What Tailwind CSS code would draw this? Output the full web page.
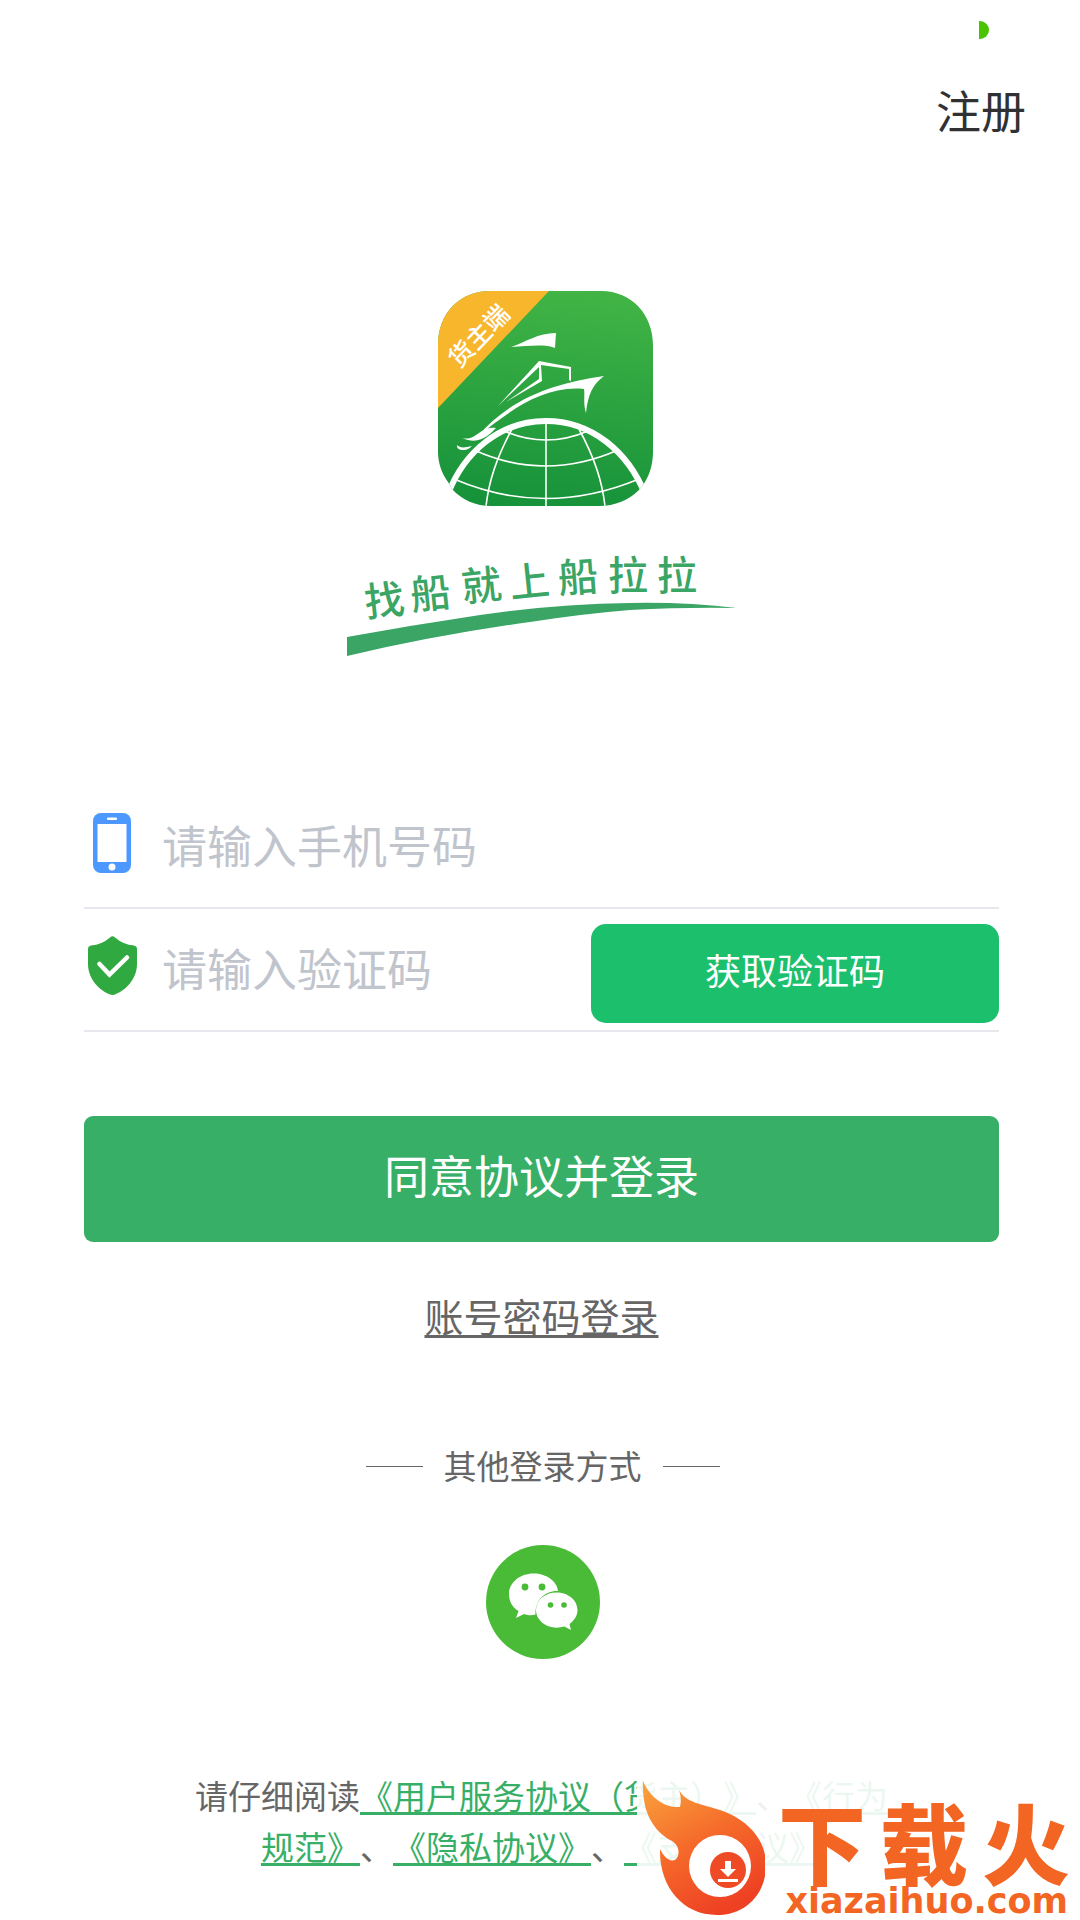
<!DOCTYPE html>
<html lang="zh-CN">
<head>
<meta charset="utf-8">
<meta name="viewport" content="width=device-width, initial-scale=1">
<title>登录</title>
<script src="https://cdn.jsdelivr.net/npm/@tailwindcss/browser@4"></script>
</head>
<body class="relative min-h-screen overflow-x-hidden bg-white font-['Noto_Sans_CJK_SC',sans-serif] text-[#666] [text-spacing-trim:space-all]">
<header class="flex flex-col items-end pt-[21px] pr-[54px]">
  <span class="mr-[37px] h-[18px] w-[10px] rounded-r-full bg-[#4ac400]"></span>
  <a href="#register" class="mt-[44px] text-[45px] leading-[54px] text-[#303133]">注册</a>
</header>

<main class="flex flex-col items-center pr-[81px] pl-[84px]">
  <svg class="mt-[154px] ml-2 h-[215px] w-[215px]" viewBox="0 0 215 215" role="img" aria-label="船拉拉货主端">
    <defs>
      <linearGradient id="tile" x1="0.55" y1="0" x2="0.45" y2="1"><stop offset="0" stop-color="#41b445"/><stop offset="1" stop-color="#16923a"/></linearGradient>
      <clipPath id="round"><path d="M52 0H163C194 0 215 24 215 54V161C215 172 212 183 207 191L201 199C191 209 177 215 161 215H53C38 215 24 209 14 198L10 191C4 183 0 172 0 161V54C0 22 22 0 52 0Z"/></clipPath>
    </defs>
    <g clip-path="url(#round)">
      <rect width="215" height="215" fill="url(#tile)"/>
      <path d="M0 0H111L0 117Z" fill="#f8b62d"/>
      <text transform="translate(43 47) rotate(-46)" text-anchor="middle" font-size="25" font-weight="500" fill="#fff" y="6">货主端</text>
      <g fill="#fff">
        <path d="M73 56C88 51 100 42 118 42L117 57C107 53 91 55 73 56Z"/>
        <path fill-rule="evenodd" d="M60 115L101 70L133 76V90L131 89V78L103 74L104 90L68 111L101 88V76Z"/>
        <path d="M39 146C74 105 119 92 166 85C154 94 150 104 148 122C145 113 147 104 146 98C105 94 70 121 39 146Z"/>
        <path d="M24 147C38 151 42 134 58 137C52 143 42 155 24 147Z"/>
        <path d="M19 154C23 158 28 156 34 155C27 162 18 159 19 154Z"/>
      </g>
      <g fill="none" stroke="#fff">
        <path d="M10 203C26 161 62 130 108 130S190 161 207 203" stroke-width="6"/>
        <g stroke-width="1.600">
          <path d="M108 131V215M74 138C58 168 51 190 48 215M141 138C157 168 164 190 167 215"/>
          <path d="M66 140Q108 158 150 140M36 159Q107 191 180 159M16 188Q107 227 201 188"/>
        </g>
      </g>
    </g>
  </svg>

  <svg class="mt-[44px] h-[110px] w-[392px] overflow-visible" viewBox="0 0 392 110" fill="#3aa565" role="img" aria-label="找船就上船拉拉">
    <text font-size="40" font-weight="500" text-anchor="middle" x="40 86 137 185 233 282 331" y="67 60 52 48 43 40 40" rotate="-6 -6 -6 -6 -4 0 0" class="font-['Noto_Sans_CJK_SC']">找船就上船拉拉</text>
    <path d="M1 87Q67 75 134 65Q209 54 284 53Q340 52 391 58Q340 57 284 60Q235 64 184 72Q90 85 1 106Z"/>
  </svg>

  <form class="mt-[126px] w-full" onsubmit="return false">
    <div class="flex h-[123px] items-center border-b-2 border-[#e6e8ee]">
      <label for="phone" class="flex w-[78px] shrink-0 justify-start pb-2 pl-[9px]" aria-label="手机号码">
        <svg class="h-[60px] w-[38px]" viewBox="0 0 38 60"><rect width="38" height="60" rx="8" fill="#4c98ff"/><rect x="4.500" y="11" width="29" height="38" fill="#fff"/><rect x="14" y="4.500" width="10" height="2.500" rx="1" fill="#fff"/><circle cx="19" cy="54" r="3.500" fill="#fff"/></svg>
      </label>
      <input id="phone" type="tel" placeholder="请输入手机号码" class="h-[66px] min-w-0 flex-1 bg-transparent pb-[3px] text-[45px] outline-none placeholder:text-[#c0c4cc]">
    </div>
    <div class="flex h-[123px] items-center border-b-2 border-[#e6e8ee]">
      <label for="code" class="flex w-[78px] shrink-0 justify-start pb-2 pl-1" aria-label="验证码">
        <svg class="h-[59px] w-[49px]" viewBox="0 0 49 59"><path d="M22 1.500Q24.500-1 27 1.500Q35 8.500 46 9.500Q49 10 49 13V28C49 44 36 55 28 58Q24.500 60 21 58C13 55 0 44 0 28V13Q0 10 3 9.500Q14 8.500 22 1.500Z" fill="#30a940"/><path d="M11.500 28L21.500 38.500L39 21.500" fill="none" stroke="#fff" stroke-width="4.500" stroke-linecap="round"/></svg>
      </label>
      <input id="code" type="text" inputmode="numeric" placeholder="请输入验证码" class="h-[66px] min-w-0 flex-1 bg-transparent pb-[3px] text-[45px] outline-none placeholder:text-[#c0c4cc]">
      <button type="button" class="mt-2 h-[99px] w-[408px] shrink-0 rounded-[15px] bg-[#1bbf6c] pb-[10px] text-[36px] text-white">获取验证码</button>
    </div>
    <button type="submit" class="mt-[84px] h-[126px] w-full rounded-[9px] bg-[#37af66] pb-2 text-[45px] text-white">同意协议并登录</button>
  </form>

  <a href="#password" class="mt-[46px] text-[39px] leading-[54px] underline decoration-3 underline-offset-3 [text-decoration-skip-ink:none]">账号密码登录</a>

  <section class="mt-[99px] ml-[2px] flex flex-col items-center">
    <div class="flex items-center gap-[21px]">
      <span class="mt-[3px] h-px w-[57px] bg-[#666]"></span>
      <h2 class="text-[33px] leading-[48px]">其他登录方式</h2>
      <span class="mt-[3px] h-px w-[57px] bg-[#666]"></span>
    </div>
    <button type="button" aria-label="微信登录" class="mt-[56px]">
      <svg class="block h-[114px] w-[114px]" viewBox="0 0 114 114"><circle cx="57" cy="57" r="57" fill="#49bb37"/><path d="M47.500 28.500C61 28.500 71 36.500 72 46C59 45.500 49 55 49.500 69.500C45 71 41 70 38 69L30 73L32.500 66C26 62 23 56 23 49C23 37.500 34 28.500 47.500 28.500Z" fill="#fff"/><path d="M70.500 47.500C82 47.500 91.500 55 91.500 65C91.500 71 88 75.500 83.500 79L85 85L78.500 81.500C63 86 50 76.500 50 65C50 55 59 47.500 70.500 47.500Z" fill="#fff"/><g fill="#49bb37"><circle cx="39" cy="42" r="3.400"/><circle cx="56" cy="42" r="3.400"/><circle cx="64.500" cy="60" r="2.800"/><circle cx="78" cy="60" r="2.800"/></g></svg>
    </button>
  </section>

  <p class="mt-[111px] w-[708px] max-w-full text-center text-[33px] leading-[51px] [&_a]:text-[#37af66] [&_a]:underline [&_a]:decoration-3 [&_a]:underline-offset-3 [&_a]:[text-decoration-skip-ink:none]">请仔细阅读<a href="#service">《用户服务协议（货主）》</a>、<a href="#conduct">《行为规范》</a>、<a href="#privacy">《隐私协议》</a>、<a href="#payment">《支付协议》</a></p>
</main>

<aside class="absolute right-0 bottom-0 flex h-[140px] w-[443px] bg-white/90 text-[#f26522]">
  <svg class="h-[140px] w-[128px] shrink-0" viewBox="0 0 128 140" aria-hidden="true">
    <defs><linearGradient id="flame" x1="0.1" y1="0" x2="0.6" y2="1"><stop offset="0" stop-color="#f9a03c"/><stop offset="0.5" stop-color="#f56a2a"/><stop offset="1" stop-color="#ee4023"/></linearGradient></defs>
    <path d="M6 1C12 15 25 28 43 27Q45 18 42 10C49 23 65 24 83 30C112 40 130 61 129 87C128 115 108 135 80 135C45 135 22 106 23 69C27 77 32 82 38 80C44 75 42 65 35 61C13 49 5 28 6 1Z" fill="url(#flame)"/>
    <circle cx="83" cy="86" r="31" fill="#fff"/><circle cx="91" cy="90" r="18" fill="#ee4a26"/>
    <path d="M88 81H94V89H99L91 97L83 89H88ZM81 99H101V102H81Z" fill="#fff"/>
  </svg>
  <div class="flex flex-1 flex-col items-end pt-[18px] pr-[10px]">
    <strong class="flex gap-[14px] text-[88px] leading-[84px] font-black"><span>下</span><span>载</span><span>火</span></strong>
    <span class="pr-[2px] font-['DejaVu_Sans'] text-[35px] leading-[38px] font-bold">xiazaihuo.com</span>
  </div>
</aside>
</body>
</html>
